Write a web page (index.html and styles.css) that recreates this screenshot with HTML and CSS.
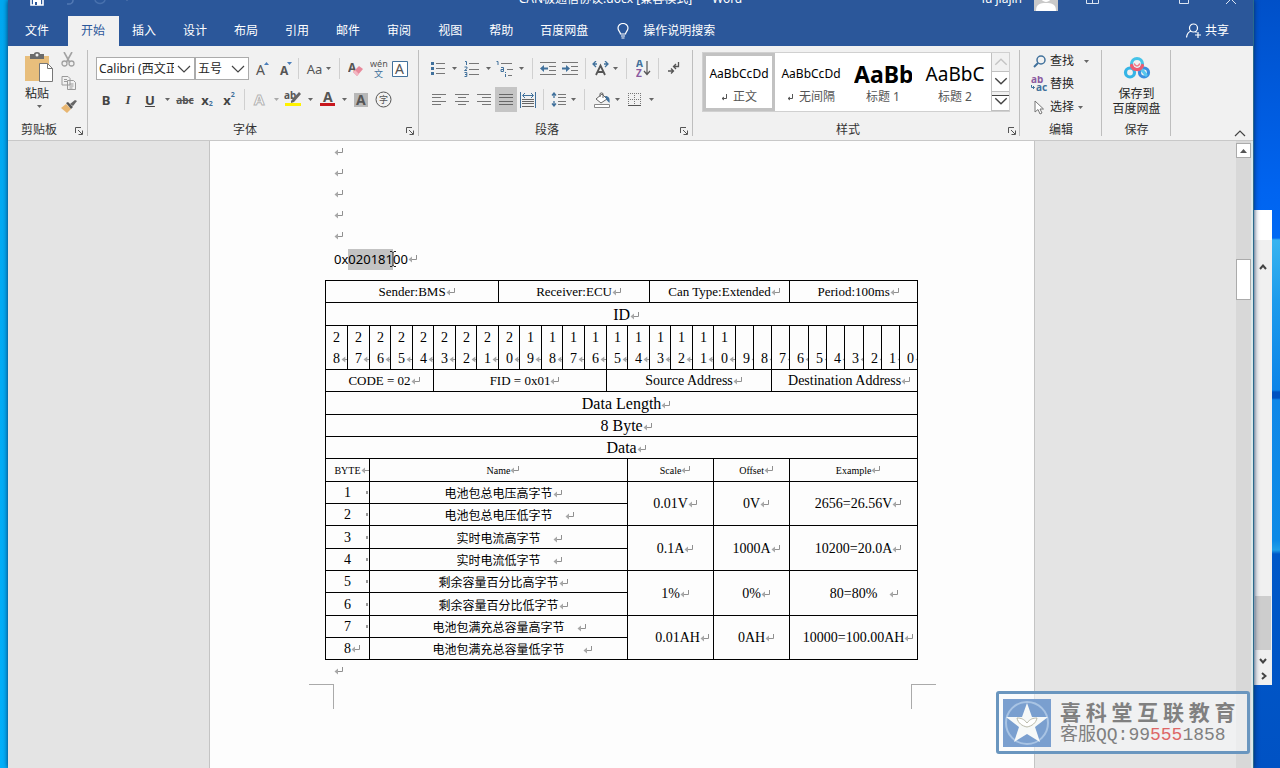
FILE: index.html
```html
<!DOCTYPE html>
<html lang="zh-CN">
<head>
<meta charset="utf-8">
<title>Word</title>
<link rel="stylesheet" href="styles.css">
</head>
<body>
<svg class="defs" aria-hidden="true">
  <symbol id="caret" viewBox="0 0 7 4"><path d="M0 0h7L3.500 4z" fill="#666"/></symbol>
  <symbol id="caret-up" viewBox="0 0 7 4"><path d="M0 4h7L3.500 0z" fill="#555"/></symbol>
  <symbol id="launch" viewBox="0 0 8 8"><path d="M.5 6V.5H6M3 3l4 4M7.500 3.500v4h-4" fill="none" stroke="#555"/></symbol>
  <symbol id="chev-down" viewBox="0 0 12 7"><path d="M1 1l5 5 5-5" fill="none" stroke="#444" stroke-width="1.200"/></symbol>
  <symbol id="chev-up" viewBox="0 0 12 7"><path d="M1 6l5-5 5 5" fill="none" stroke="currentColor" stroke-width="1.200"/></symbol>
</svg>
<div class="backwin">
  <div class="backwin-head"></div>
  <div class="backwin-bar">
    <svg class="bk-up" width="8" height="6" viewBox="0 0 8 6"><path d="M1 5l3-3.500L7 5" fill="none" stroke="#444" stroke-width="2"/></svg>
    <div class="bk-thumb"></div>
    <svg width="8" height="6" viewBox="0 0 8 6"><path d="M1 1l3 3.500L7 1" fill="none" stroke="#444" stroke-width="2"/></svg>
    <svg width="7" height="8" viewBox="0 0 7 8"><path d="M2 1l3.500 3L2 7" fill="none" stroke="#444" stroke-width="2"/></svg>
  </div>
</div>
<main class="window">
  <header class="titlebar">
    <div class="quick">
      <svg width="14" height="14" viewBox="0 0 14 14"><path d="M1 1h10l2 2v10H1z" fill="none" stroke="#fff" stroke-width="1.600"/><path d="M3 8h8v5H3z" fill="#fff"/><path d="M5 10h2v3H5z" fill="#2b579a"/></svg>
      <svg width="13" height="12" viewBox="0 0 13 12"><path d="M2 4h5a4 3.500 0 010 7H5" fill="none" stroke="#5279b4" stroke-width="1.500"/></svg>
      <svg width="13" height="12" viewBox="0 0 13 12"><path d="M11 4a5 4 0 11-8 0" fill="none" stroke="#4770ad" stroke-width="1.500"/></svg>
      <svg width="6" height="4" viewBox="0 0 6 4"><path d="M0 0h6L3 3.500z" fill="#fff"/></svg>
    </div>
    <div class="doc-title"><span>CAN极通信协议.docx [兼容模式]</span><span>-</span><span>Word</span></div>
    <div class="account">
      <span class="user">lu jiajin</span>
      <svg class="avatar" width="24" height="24" viewBox="0 0 24 24"><path d="M0 0h24v24H0z" fill="#c9c9c9"/><circle cx="12" cy="10" r="5" fill="#fff"/><path d="M2 24c0-7 4-8 10-8s10 1 10 8z" fill="#fff"/></svg>
      <svg class="w-opt" width="13" height="10" viewBox="0 0 13 10"><path d="M.5.5h12v9H.5zM.5 5.500h12M6.500 5.500v4" fill="none" stroke="#dce5f2"/></svg>
      <svg class="w-max" width="10" height="10" viewBox="0 0 10 10"><path d="M.5.5h9v9h-9z" fill="none" stroke="#dce5f2"/></svg>
      <svg width="12" height="12" viewBox="0 0 12 12"><path d="M1 1l10 10M11 1L1 11" stroke="#dce5f2"/></svg>
    </div>
  </header>
  <nav class="tabs">
    <button class="tab tab-file">文件</button><button class="tab active">开始</button><button class="tab">插入</button><button class="tab">设计</button><button class="tab">布局</button><button class="tab">引用</button><button class="tab">邮件</button><button class="tab">审阅</button><button class="tab">视图</button><button class="tab">帮助</button><button class="tab">百度网盘</button>
    <button class="tab tell"><svg width="12" height="16" viewBox="0 0 12 16"><path d="M3.500 11c0-2-2.500-3-2.500-6a5 4.500 0 0110 0c0 3-2.500 4-2.500 6zM4 13h4M4.500 15h3" fill="none" stroke="#fff" stroke-width="1.200"/></svg>操作说明搜索</button>
    <button class="tab share"><svg width="16" height="16" viewBox="0 0 16 16"><circle cx="7.500" cy="5" r="4" fill="none" stroke="#fff" stroke-width="1.200"/><path d="M5 8c-3 1-4 3-4.500 6.500M9.500 8.500l1 1M12 9v6M9 12h6" fill="none" stroke="#fff" stroke-width="1.200"/></svg>共享</button>
  </nav>
  <section class="ribbon">
    <div class="group g-clip">
      <div class="clip">
        <button class="paste">
          <svg width="30" height="30" viewBox="0 0 30 30"><path d="M1 4h24v25H1z" fill="#e8be7c"/><path d="M6 2h4a3 2 0 016 0h4v5H6z" fill="#6b6b6b"/><circle cx="13" cy="3" r="1.500" fill="#f1f1f1"/><path d="M15.500 11.500h8l5 5v13h-13z" fill="#fff" stroke="#777"/><path d="M23.500 11.500v5h5" fill="none" stroke="#777"/></svg>
          <span>粘贴</span>
          <svg width="5" height="3"><use href="#caret"/></svg>
        </button>
        <div class="clip-side">
          <button aria-label="剪切"><svg width="14" height="15" viewBox="0 0 14 15"><path d="M3 0l5.500 10M11 0L5.500 10" stroke="#a2a2a2" stroke-width="1.600"/><circle cx="3.500" cy="11.500" r="2.500" fill="none" stroke="#a2a2a2" stroke-width="1.300"/><circle cx="10.500" cy="11.500" r="2.500" fill="none" stroke="#a2a2a2" stroke-width="1.300"/></svg></button>
          <button aria-label="复制"><svg width="16" height="14" viewBox="0 0 16 14"><path d="M1 .5h6l2 2V9H1zM6.500 4.500h6l2 2v7h-8z" fill="#f1f1f1" stroke="#9a9a9a"/><path d="M3 3.500h3M3 5.500h3M8.500 8h4M8.500 10h4M8.500 12h3" stroke="#9a9a9a"/></svg></button>
          <button aria-label="格式刷"><svg width="16" height="14" viewBox="0 0 16 14"><path d="M0 9l5-4 5 5-4 4z" fill="#e8b671"/><path d="M5 4l2-1 5 5-2 2z" fill="#555"/><path d="M9 5l5-4 2 1-4 5z" fill="#666"/></svg></button>
        </div>
      </div>
      <div class="caption"><span>剪贴板</span><svg width="8" height="8"><use href="#launch"/></svg></div>
    </div>
    <div class="group g-font">
      <div class="row">
        <select class="combo c-face" aria-label="字体"><option>Calibri (西文正文)</option></select><select class="combo c-size" aria-label="字号"><option>五号</option></select>
        <button class="b26" aria-label="增大字号"><svg width="14" height="16" viewBox="0 0 14 16"><text x="1" y="14" class="t14">A</text><path d="M9 4l2.500-3L14 4z" fill="#4a7ebb"/></svg></button>
        <button class="b20" aria-label="减小字号"><svg width="13" height="16" viewBox="0 0 13 16"><text x="1" y="14" class="t12">A</text><path d="M8 1h5l-2.500 3z" fill="#4a7ebb"/></svg></button>
        <i class="sep s7"></i>
        <button class="b34" aria-label="更改大小写"><span class="aa">Aa</span><svg width="5" height="3"><use href="#caret"/></svg></button>
        <i class="sep s7"></i>
        <button class="b26" aria-label="清除格式"><svg width="16" height="16" viewBox="0 0 16 16"><text x="0" y="11" class="t12">A</text><path d="M5 11l6-6 4 3-6 7z" fill="#e8899b"/><path d="M5 11l2-2 4 4-2 2z" fill="#f3b6c2"/></svg></button>
        <button class="b20" aria-label="拼音指南"><svg width="18" height="18" viewBox="0 0 18 18"><text x="0" y="7" class="t9">wén</text><text x="4" y="17" class="t9 blue">文</text></svg></button>
        <button class="b22" aria-label="字符边框"><svg width="16" height="16" viewBox="0 0 16 16"><path d="M.5.5h15v15H.5z" fill="#fff" stroke="#41719c"/><text x="3" y="13" class="t14">A</text></svg></button>
      </div>
      <div class="row">
        <button class="b20 glyph">B</button><button class="b24 glyph ital">I</button><button class="b20 glyph under">U</button><button class="b14" aria-label="下划线选项"><svg width="5" height="3"><use href="#caret"/></svg></button><button class="b22 strike">abc</button><button class="b22 glyph">x<sub>2</sub></button><button class="b22 glyph">x<sup>2</sup></button>
        <i class="sep s8"></i>
        <button class="b24" aria-label="文本效果"><svg width="14" height="15" viewBox="0 0 14 15"><text x="1" y="13" class="t15 outline">A</text></svg></button><button class="b8 dim" aria-label="效果选项"><svg width="5" height="3"><use href="#caret"/></svg></button>
        <button class="b26" aria-label="突出显示"><svg width="18" height="17" viewBox="0 0 18 17"><text x="0" y="8" class="t10">ab</text><path d="M7 10l8-9 2 2-7 8-3 1z" fill="#666"/><path d="M1 12h16v3H1z" fill="#fff200"/></svg></button><button class="b8" aria-label="突出显示颜色"><svg width="5" height="3"><use href="#caret"/></svg></button>
        <button class="b26" aria-label="字体颜色"><svg width="17" height="17" viewBox="0 0 17 17"><text x="4" y="11" class="t14 heavy">A</text><path d="M1 12h15v3H1z" fill="#c8171e"/></svg></button><button class="b8" aria-label="颜色选项"><svg width="5" height="3"><use href="#caret"/></svg></button>
        <button class="b26" aria-label="字符底纹"><svg width="14" height="14" viewBox="0 0 14 14"><path d="M0 0h14v14H0z" fill="#b8b8b8"/><text x="2" y="12" class="t14 heavy">A</text></svg></button>
        <button class="b18" aria-label="带圈字符"><svg width="17" height="17" viewBox="0 0 17 17"><circle cx="8.500" cy="8.500" r="7.500" fill="none" stroke="#555"/><text x="4" y="12" class="t9">字</text></svg></button>
      </div>
      <div class="caption"><span>字体</span><svg width="8" height="8"><use href="#launch"/></svg></div>
    </div>
    <div class="group g-para">
      <div class="row">
        <button class="b22" aria-label="项目符号"><svg width="14" height="15" viewBox="0 0 14 15"><path d="M0 1h3v3H0zM0 6h3v3H0zM0 11h3v3H0z" fill="#41719c"/><path d="M5 2.500h9M5 7.500h9M5 12.500h9" stroke="#777"/></svg></button><button class="b12" aria-label="符号选项"><svg width="5" height="3"><use href="#caret"/></svg></button>
        <button class="b22" aria-label="编号"><svg width="15" height="16" viewBox="0 0 15 16"><path d="M1 .5h1.500V4M.5 6H3v1.500L.5 9.500H3M.5 11.500h2.300v4H.5M1 13.500h2" fill="none" stroke="#41719c"/><path d="M5 2.500h10M5 8.500h10M5 13.500h10" stroke="#777"/></svg></button><button class="b12" aria-label="编号选项"><svg width="5" height="3"><use href="#caret"/></svg></button>
        <button class="b22" aria-label="多级列表"><svg width="18" height="16" viewBox="0 0 18 16"><path d="M.5.5H2V4M5 6.500h2.500v4M5 8.500h2.500M5 8.500v2h2.500M9.500 11v1M9.500 13v3" fill="none" stroke="#41719c"/><path d="M5 2.500h11M11 8.500h6M12 14.500h4" stroke="#777"/></svg></button><button class="b10" aria-label="列表选项"><svg width="5" height="3"><use href="#caret"/></svg></button>
        <i class="sep s12"></i>
        <button class="b20" aria-label="减少缩进"><svg width="16" height="13" viewBox="0 0 16 13"><path d="M0 .5h16M9 4.500h7M9 8.500h7M0 12.500h16" stroke="#777"/><path d="M0 6.500l4-3.500v2.500h4v2H4V10z" fill="#41719c"/></svg></button><button class="b24" aria-label="增加缩进"><svg width="16" height="13" viewBox="0 0 16 13"><path d="M0 .5h16M9 4.500h7M9 8.500h7M0 12.500h16" stroke="#777"/><path d="M8 6.500L4 3v2.500H0v2h4V10z" fill="#41719c"/></svg></button>
        <i class="sep s8"></i>
        <button class="b22" aria-label="中文版式"><svg width="17" height="15" viewBox="0 0 17 15"><path d="M4 14L8.500 4.500 13 14M5.500 11h6" fill="none" stroke="#555" stroke-width="1.800"/><path d="M4 0L1 3l3 3M1 3h4M13 0l3 3-3 3M16 3h-4" fill="none" stroke="#41719c" stroke-width="1.300"/></svg></button><button class="b8" aria-label="版式选项"><svg width="5" height="3"><use href="#caret"/></svg></button>
        <i class="sep s14"></i>
        <button class="b20" aria-label="排序"><svg width="15" height="17" viewBox="0 0 15 17"><text x="0" y="7" class="t10 blue">A</text><text x="0" y="17" class="t10 purple">Z</text><path d="M11 1v13M8 11l3 3.500 3-3.500" fill="none" stroke="#555" stroke-width="1.200"/></svg></button>
        <i class="sep s10"></i>
        <button class="b22" aria-label="显示编辑标记"><svg width="12" height="14" viewBox="0 0 12 14"><path d="M10.500 0v4.500H6M8 2L5.500 4.500 8 7M0 9h5M3 6.500L5.500 9 3 11.500" fill="none" stroke="#555" stroke-width="1.300"/></svg></button>
      </div>
      <div class="row">
        <button class="b24" aria-label="左对齐"><svg width="14" height="11" viewBox="0 0 14 11"><path d="M0 .5h14M0 3.500h9M0 7.500h14M0 10.500h9" stroke="#777"/></svg></button><button class="b22" aria-label="居中"><svg width="14" height="11" viewBox="0 0 14 11"><path d="M0 .5h14M3 3.500h8M0 7.500h14M3 10.500h8" stroke="#777"/></svg></button><button class="b22" aria-label="右对齐"><svg width="14" height="11" viewBox="0 0 14 11"><path d="M0 .5h14M5 3.500h9M0 7.500h14M5 10.500h9" stroke="#777"/></svg></button><button class="b22 pressed" aria-label="两端对齐"><svg width="14" height="11" viewBox="0 0 14 11"><path d="M0 .5h14M0 3.500h14M0 7.500h14M0 10.500h14" stroke="#666"/></svg></button><button class="b22" aria-label="分散对齐"><svg width="16" height="16" viewBox="0 0 16 16"><path d="M.5 0v16M15.500 0v16M3 3.500h10M5 1L2.500 3.500 5 6M11 1l2.500 2.500L11 6" fill="none" stroke="#41719c"/><path d="M2 7.500h12M2 9.500h12M2 11.500h12M2 14.500h12" stroke="#666"/></svg></button>
        <i class="sep s8"></i>
        <button class="b22" aria-label="行距"><svg width="15" height="15" viewBox="0 0 15 15"><path d="M3 1v5M1 3.500L3 1l2 2.500M3 14V9M1 11.500L3 14l2-2.500" fill="none" stroke="#41719c" stroke-width="1.300"/><path d="M7 2.500h8M7 5.500h8M7 9.500h8M7 12.500h8" stroke="#777"/></svg></button><button class="b8" aria-label="行距选项"><svg width="5" height="3"><use href="#caret"/></svg></button>
        <i class="sep s14"></i>
        <button class="b22" aria-label="底纹"><svg width="17" height="16" viewBox="0 0 17 16"><path d="M2 7l6-5 5 5-6 4z" fill="#fff" stroke="#666"/><path d="M6 5V1.500a2 1.500 0 013 0V6" fill="none" stroke="#666"/><path d="M11 4c4 0 5 2 4.500 7l-3-3z" fill="#41719c"/><path d="M.5 12.500h15v3H.5z" fill="#fff" stroke="#888"/></svg></button><button class="b8" aria-label="底纹颜色"><svg width="5" height="3"><use href="#caret"/></svg></button>
        <button class="b26" aria-label="边框"><svg width="13" height="13" viewBox="0 0 13 13"><path d="M0 .5h13M0 6.500h13M.5 0v13M6.500 0v13M12.500 0v13" fill="none" stroke="#777" stroke-dasharray="1 1"/><path d="M0 12.500h13" stroke="#555"/></svg></button><button class="b8" aria-label="边框选项"><svg width="5" height="3"><use href="#caret"/></svg></button>
      </div>
      <div class="caption"><span>段落</span><svg width="8" height="8"><use href="#launch"/></svg></div>
    </div>
    <div class="group g-style">
      <div class="gallery">
        <button class="style chosen"><span class="sample">AaBbCcDd</span><span class="sname"><b class="mk"></b>正文</span></button>
        <button class="style"><span class="sample">AaBbCcDd</span><span class="sname"><b class="mk"></b>无间隔</span></button>
        <button class="style"><span class="sample big heavy">AaBb</span><span class="sname">标题 1</span></button>
        <button class="style"><span class="sample mid">AaBbC</span><span class="sname">标题 2</span></button>
        <div class="gscroll">
          <button aria-label="上一行" class="faint"><svg width="14" height="8"><use href="#chev-up"/></svg></button>
          <button aria-label="下一行"><svg width="14" height="8"><use href="#chev-down"/></svg></button>
          <button aria-label="其他" class="more"><svg width="14" height="8"><use href="#chev-down"/></svg></button>
        </div>
      </div>
      <div class="caption"><span>样式</span><svg width="8" height="8"><use href="#launch"/></svg></div>
    </div>
    <div class="group g-edit">
      <div class="edits">
        <button><svg width="13" height="13" viewBox="0 0 13 13"><circle cx="8" cy="5" r="4" fill="none" stroke="#41719c" stroke-width="1.500"/><path d="M5 8l-4 4" stroke="#41719c" stroke-width="2"/></svg>查找<svg class="far" width="5" height="3"><use href="#caret"/></svg></button>
        <button><svg width="17" height="16" viewBox="0 0 17 16"><text x="0" y="7" class="t10 purple">ab</text><text x="5" y="15" class="t10 blue">ac</text><path d="M.5 9v2.500h3M2 10l1.500 1.500L2 13" fill="none" stroke="#41719c"/></svg>替换</button>
        <button><svg width="10" height="15" viewBox="0 0 10 15"><path d="M1 1v11l3-2.500L6 14l2-1-2-4h3.500z" fill="#fff" stroke="#777"/></svg>选择<svg class="near" width="5" height="3"><use href="#caret"/></svg></button>
      </div>
      <div class="caption"><span>编辑</span></div>
    </div>
    <div class="group g-save">
      <button class="save">
        <svg width="28" height="24" viewBox="0 0 28 24"><g fill="none" stroke-width="3.200" stroke-linecap="round"><circle cx="7" cy="16.500" r="4.500" stroke="#35b5e6"/><circle cx="21" cy="16.500" r="4.500" stroke="#3a8fe0"/><path d="M18 12.500l5 6.500" stroke="#58c6ee"/><circle cx="14" cy="8" r="5.500" stroke="#45c3e8"/><path d="M8.500 9.500a5.500 5.500 0 005 4 5.500 5.500 0 006-4" stroke="#ee5a70"/><path d="M11.500 8a2.600 2.600 0 005 0" stroke="#f07b8b" stroke-width="1.500"/></g></svg>
        <span>保存到<br>百度网盘</span>
      </button>
      <div class="caption"><span>保存</span></div>
    </div>
    <button class="collapse" aria-label="折叠功能区"><svg width="12" height="7"><use href="#chev-up"/></svg></button>
  </section>
  <section class="canvas">
    <div class="scroller">
      <article class="page">
        <p class="ret"></p><p class="ret"></p><p class="ret"></p><p class="ret"></p><p class="ret"></p>
        <p class="ret idline">0x<mark>020181</mark><svg class="ibeam" width="8" height="18" viewBox="0 0 8 18"><path d="M1 1.500h2l1 1 1-1h2M4 2v14M1 16.500h2l1-1 1 1h2" fill="none" stroke="#222"/></svg>00</p>
        <table class="can">
          <colgroup><col class="c22"><col class="c22"><col class="c21"><col class="c22"><col class="c21"><col class="c22"><col class="c21"><col class="c22"><col class="c21"><col class="c22"><col class="c21"><col class="c22"><col class="c22"><col class="c21"><col class="c22"><col class="c21"><col class="c22"><col class="c21"><col class="c22"><col class="c18"><col class="c18"><col class="c18"><col class="c19"><col class="c18"><col class="c18"><col class="c19"><col class="c18"><col class="c18"><col class="c18"></colgroup>
          <tbody>
          <tr class="f13"><td colspan="8"><span class="ret">Sender:BMS</span></td><td colspan="7"><span class="ret">Receiver:ECU</span></td><td colspan="7"><span class="ret">Can Type:Extended</span></td><td colspan="7"><span class="ret">Period:100ms</span></td></tr>
          <tr class="f16"><td colspan="29"><span class="ret">ID</span></td></tr>
          <tr class="bits"><td>2<br>8</td><td>2<br>7</td><td>2<br>6</td><td>2<br>5</td><td>2<br>4</td><td>2<br>3</td><td>2<br>2</td><td>2<br>1</td><td>2<br>0</td><td>1<br>9</td><td>1<br>8</td><td>1<br>7</td><td>1<br>6</td><td>1<br>5</td><td>1<br>4</td><td>1<br>3</td><td>1<br>2</td><td>1<br>1</td><td>1<br>0</td><td>9</td><td>8</td><td>7</td><td>6</td><td>5</td><td>4</td><td>3</td><td>2</td><td>1</td><td>0</td></tr>
          <tr class="f13"><td colspan="5"><span class="ret">CODE = 02</span></td><td colspan="8"><span class="ret">FID = 0x01</span></td><td colspan="8" class="f14"><span class="ret">Source Address</span></td><td colspan="8" class="f14"><span class="ret">Destination Address</span></td></tr>
          <tr class="f16"><td colspan="29"><span class="ret">Data Length</span></td></tr>
          <tr class="f16"><td colspan="29"><span class="ret">8 Byte</span></td></tr>
          <tr class="f16"><td colspan="29"><span class="ret">Data</span></td></tr>
          <tr class="f10"><td colspan="2"><span class="ret">BYTE</span></td><td colspan="12"><span class="ret">Name</span></td><td colspan="4"><span class="ret">Scale</span></td><td colspan="4"><span class="ret">Offset</span></td><td colspan="7"><span class="ret">Example</span></td></tr>
          <tr><td colspan="2" class="idx">1</td><td colspan="12" class="zh"><span class="ret">电池包总电压高字节</span></td><td colspan="4" rowspan="2"><span class="ret">0.01V</span></td><td colspan="4" rowspan="2"><span class="ret">0V</span></td><td colspan="7" rowspan="2"><span class="ret">2656=26.56V</span></td></tr>
          <tr><td colspan="2" class="idx">2</td><td colspan="12" class="zh"><span class="ret gap">电池包总电压低字节</span></td></tr>
          <tr><td colspan="2" class="idx">3</td><td colspan="12" class="zh"><span class="ret gap">实时电流高字节</span></td><td colspan="4" rowspan="2"><span class="ret">0.1A</span></td><td colspan="4" rowspan="2"><span class="ret">1000A</span></td><td colspan="7" rowspan="2"><span class="ret">10200=20.0A</span></td></tr>
          <tr><td colspan="2" class="idx">4</td><td colspan="12" class="zh"><span class="ret gap">实时电流低字节</span></td></tr>
          <tr><td colspan="2" class="idx">5</td><td colspan="12" class="zh"><span class="ret">剩余容量百分比高字节</span></td><td colspan="4" rowspan="2"><span class="ret">1%</span></td><td colspan="4" rowspan="2"><span class="ret">0%</span></td><td colspan="7" rowspan="2"><span class="ret gap">80=80%</span></td></tr>
          <tr><td colspan="2" class="idx">6</td><td colspan="12" class="zh"><span class="ret">剩余容量百分比低字节</span></td></tr>
          <tr><td colspan="2" class="idx">7</td><td colspan="12" class="zh"><span class="ret gap">电池包满充总容量高字节</span></td><td colspan="4" rowspan="2" class="shift"><span class="ret">0.01AH</span></td><td colspan="4" rowspan="2"><span class="ret">0AH</span></td><td colspan="7" rowspan="2"><span class="ret">10000=100.00AH</span></td></tr>
          <tr><td colspan="2"><span class="ret">8</span></td><td colspan="12" class="zh"><span class="ret gap wide">电池包满充总容量低字节</span></td></tr>
          </tbody>
        </table>
        <p class="ret last"></p>
        <div class="crops"><i class="crop-l"></i><i class="crop-r"></i></div>
      </article>
    </div>
    <div class="vbar">
      <button aria-label="向上滚动"><svg width="7" height="4"><use href="#caret-up"/></svg></button>
      <div class="thumb"></div>
    </div>
  </section>
</main>
<aside class="watermark">
  <svg width="48" height="48" viewBox="0 0 48 48"><path d="M0 0h48v48H0z" fill="#7a9fcf"/><circle cx="24" cy="24" r="21" fill="none" stroke="#a9c4e4" stroke-width="2"/><path d="M24 4l5 14h16L32 28l5 15-13-8-13 8 5-15L3 18h16z" fill="#f7f9f8"/><path d="M14 19c4 0 7 1 10 5 3-4 6-5 10-5-1 5-5 8-10 9-5-1-9-4-10-9z" fill="#fff" stroke="#b9b9a8"/></svg>
  <div class="wtext"><div class="w1">喜 科 堂 互 联 教 育</div><div class="w2">客服QQ:99<em>555</em>1858</div></div>
</aside>
</body>
</html>
```
FILE: styles.css
```css
* { box-sizing: border-box; }
html, body { height: 100%; }
body {
  margin: 0;
  overflow: hidden;
  position: relative;
  padding: 0 26px 0 8px;
  font: 12px/16px "Noto Sans", "Noto Sans CJK SC", sans-serif;
  color: #262626;
  background:
    linear-gradient(#00a8f0, #00b0fa) left / 8px 100% no-repeat,
    linear-gradient(#0050c8 0, #0064f0 190px, #0068f4 238px, #38b4f0 240px, #1e9cec 300px, #0c84e8 390px, #0050c0 392px, #0050c0 398px, #1088e8 400px, #0c8ae6 540px, #20a0e8 550px, #0058c8 554px, #0052c4 100%);
}
button { font: inherit; color: inherit; border: 0; background: none; padding: 0; margin: 0; }
svg { display: block; flex: none; }
.defs { position: absolute; width: 0; height: 0; }

.backwin { position: absolute; top: 210px; right: 8px; width: 18px; height: 475px; display: flex; flex-direction: column; background: #f0f0f0; }
.backwin-head { height: 30px; background: #fff; }
.backwin-bar { flex: 1; display: flex; flex-direction: column; align-items: center; gap: 8px; padding: 24px 0 5px; }
.bk-up { margin-bottom: auto; }
.bk-thumb { width: 16px; height: 54px; background: #cdcdcd; }

.window { position: relative; height: 100%; display: flex; flex-direction: column; border-right: 1px solid #2a6a8c; box-shadow: 0 0 5px #0a2a5a; background: #f1f1f1; overflow: hidden; }
.titlebar { flex: none; height: 34px; margin-top: -18px; display: grid; grid-template-columns: 1fr auto 1fr; align-items: center; background: #2b579a; color: #fff; }
.quick { display: flex; align-items: center; gap: 18px; padding-left: 22px; }
.doc-title { display: flex; gap: 8px; }
.account { display: flex; justify-content: flex-end; align-items: center; padding-right: 16px; }
.user { margin-right: 12px; }
.avatar { margin-right: 28px; }
.w-opt { margin-right: 80px; }
.w-max { margin-right: 36px; }
.tabs { flex: none; display: flex; height: 30px; padding: 0 10px 0 4px; background: #2b579a; color: #fff; }
.tab { padding: 0 14px 1px 13px; white-space: nowrap; }
.tab-file { padding-right: 19px; }
.tab.active { background: #f1f1f1; color: #2b579a; }
.tell, .share { display: flex; align-items: center; }
.tell { gap: 14px; padding-left: 15px; }
.share { gap: 3px; margin-left: auto; }

.ribbon { flex: none; display: flex; height: 95px; position: relative; border-bottom: 1px solid #c8c8c8; background: #f1f1f1; }
.group { position: relative; display: flex; flex-direction: column; padding: 10px 8px 0; }
.group::after { content: ""; position: absolute; right: 0; top: 4px; bottom: 4px; width: 1px; background: #bebebe; }
.g-clip { width: 80px; }
.g-font { width: 331px; }
.g-para { width: 274px; }
.g-style { width: 327px; padding: 6px 10px 0 9px; }
.g-edit { width: 82px; padding-top: 4px; }
.g-save { width: 69px; padding: 10px 4px 0; }
.caption { margin-top: auto; height: 18px; text-align: center; position: relative; color: #333; }
.caption svg { position: absolute; right: -3px; top: 5px; }
.g-clip .caption { padding-right: 18px; }
.g-font .caption { padding-right: 17px; }
.g-para .caption { padding-right: 18px; }
.g-style .caption { padding-right: 16px; }
.g-style .caption svg { right: -6px; }
.row { display: flex; height: 25px; margin-bottom: 6px; }
.row button { display: flex; align-items: center; justify-content: center; }
.b8 { width: 8px; } .b10 { width: 10px; } .b12 { width: 12px; } .b14 { width: 14px; } .b18 { width: 18px; }
.b20 { width: 20px; } .b22 { width: 22px; } .b24 { width: 24px; } .b26 { width: 26px; } .b34 { width: 34px; gap: 4px; }
.sep { flex: none; align-self: stretch; margin: 2px 0; background: linear-gradient(#d0d0d0, #d0d0d0) center / 1px 100% no-repeat; }
.s7 { width: 7px; } .s8 { width: 8px; } .s10 { width: 10px; } .s12 { width: 12px; } .s14 { width: 14px; }
.dim { opacity: .5; }
.pressed { background: #c5c5c5; }
.combo {
  appearance: none; margin: 1px 0; border: 1px solid #ababab; border-radius: 0; color: #262626; padding: 0 20px 0 2px; font: 12px/20px "Noto Sans", "Noto Sans CJK SC", sans-serif;
  background: #fff url("data:image/svg+xml,%3Csvg xmlns='http://www.w3.org/2000/svg' width='14' height='8'%3E%3Cpath d='M1 1l6 6 6-6' fill='none' stroke='%23444' stroke-width='1.200'/%3E%3C/svg%3E") right 3px center no-repeat;
}
.c-face { width: 99px; }
.c-size { width: 54px; }
.aa { font-size: 13px; color: #555; }
.glyph { font-size: 13px; font-weight: bold; color: #444; }
.ital { font-family: "Liberation Serif", serif; font-style: italic; }
.under { text-decoration: underline; }
.strike { text-decoration: line-through; font-size: 10px; font-weight: bold; color: #555; }
.glyph sub, .glyph sup { font-size: 7px; line-height: 8px; color: #41719c; }
.glyph sub { align-self: flex-end; padding-bottom: 4px; }
.glyph sup { align-self: flex-start; padding-top: 4px; }
text { fill: #555; font-family: "Noto Sans", "Noto Sans CJK SC", sans-serif; }
.t9 { font-size: 9px; } .t10 { font-size: 10px; } .t12 { font-size: 12px; } .t14 { font-size: 14px; } .t15 { font-size: 15px; }
.t10, .t12, .heavy { font-weight: bold; }
.outline { fill: #fff; stroke: #b5b5b5; font-weight: bold; }
.blue { fill: #41719c; }
.purple { fill: #8a5aa0; }

.clip { display: flex; gap: 7px; margin: -4px -8px 0 8px; }
.paste { width: 30px; display: flex; flex-direction: column; align-items: center; justify-content: space-between; height: 56px; }
.paste span { padding-right: 4px; }
.clip-side { display: flex; flex-direction: column; gap: 9px; }

.gallery { display: flex; height: 60px; border: 1px solid #d0d0d0; background: #fff; }
.style { width: 72px; display: flex; flex-direction: column; align-items: center; justify-content: flex-end; padding-bottom: 4px; overflow: hidden; }
.chosen { box-shadow: inset 0 0 0 3px #c2c2c2; }
.sample { line-height: 26px; color: #000; white-space: nowrap; }
.sample.big { font-size: 23px; width: 58px; overflow: hidden; }
.sample.mid { font-size: 19px; }
.sname { display: flex; align-items: center; gap: 5px; line-height: 20px; color: #555; }
.mk { width: 7px; height: 7px; background: url("data:image/svg+xml,%3Csvg xmlns='http://www.w3.org/2000/svg' width='7' height='7'%3E%3Cpath d='M5.500 0v4.500H1M3 3L1 4.500 3 6' fill='none' stroke='%23555'/%3E%3C/svg%3E") no-repeat; }
.gscroll { width: 18px; margin-left: auto; display: flex; flex-direction: column; }
.gscroll button { flex: 1; display: flex; align-items: center; justify-content: center; border-left: 1px solid #c0c0c0; border-bottom: 1px solid #c0c0c0; }
.faint { color: #c4c4c4; background: #f1f1f1; }
.more { box-shadow: inset 0 3px 0 #f1f1f1, inset 0 4px 0 #444; }
.edits { display: flex; flex-direction: column; gap: 1px; }
.edits button { display: grid; grid-template-columns: 18px 24px auto; align-items: center; justify-items: center; justify-content: start; column-gap: 2px; height: 22px; padding-left: 2px; }
.far { margin-left: 8px; }
.near { margin-left: 2px; }
.save { display: flex; flex-direction: column; align-items: center; gap: 6px; line-height: 15px; white-space: nowrap; }
.collapse { position: absolute; right: 7px; bottom: 3px; color: #444; }

.canvas { flex: 1; min-height: 0; display: flex; background: #e4e4e4; }
.scroller { flex: 1; overflow: hidden; }
.page { width: 826px; max-width: 100%; min-height: 100%; margin: 0 auto; padding: 0 124px; background: #fdfdfd; border: solid #c4c4c4; border-width: 0 1px; }
.page p { margin: 0; height: 21px; display: flex; align-items: center; }
.page .idline { height: 26px; font-size: 13px; line-height: 21px; color: #000; }
mark { background: #c3c3c3; color: inherit; }
.ibeam { margin: 0 -4px; }
.ret::after {
  content: ""; display: inline-block; width: 9px; height: 8px; flex: none;
  background: url("data:image/svg+xml,%3Csvg xmlns='http://www.w3.org/2000/svg' width='9' height='8'%3E%3Cpath d='M8.500 0v4.500H1' fill='none' stroke='%23909090'/%3E%3Cpath d='M4 1.500v6L.5 4.500z' fill='%23a8a8a8'/%3E%3C/svg%3E") no-repeat;
}
.can { width: 593px; margin: 8px 0 0 -9px; border-collapse: collapse; table-layout: fixed; font: 14px/20px "Liberation Serif", "Noto Sans CJK SC", serif; color: #000; }
.c18 { width: 18px; } .c19 { width: 19px; } .c21 { width: 21px; } .c22 { width: 22px; }
.can tr { height: 22px; }
.can tr:nth-child(3n + 2) { height: 23px; }
.can td { border: 1px solid #000; padding: 1px 0 0; text-align: center; white-space: nowrap; overflow: hidden; }
.can .f10 td { font-size: 10px; }
.can .f13 td { font-size: 13px; }
.can .f13 td.f14 { font-size: 14px; }
.can .f16 td { font-size: 16px; }
.can tr.bits { height: 44px; }
.can .bits td {
  text-align: left; padding-left: 7px; vertical-align: bottom; line-height: 21px;
  background: url("data:image/svg+xml,%3Csvg xmlns='http://www.w3.org/2000/svg' width='7' height='8'%3E%3Cpath d='M7 4.500H1' stroke='%23909090'/%3E%3Cpath d='M4 1.500v6L.5 4.500z' fill='%23a8a8a8'/%3E%3C/svg%3E") 15px 29px no-repeat;
}
/* The paragraph mark hangs beside the text, so the text alone is centred. */
.can .ret::after { margin-right: -9px; }
.can .gap::after { margin-left: 12px; margin-right: -21px; }
.can .wide::after { margin-left: 18px; margin-right: -27px; }
.can .idx { background: linear-gradient(#999, #999) right 1px center / 2px 3px no-repeat; }
.can .zh { font: 12px/20px "Noto Sans CJK SC", sans-serif; }
.can .shift { padding-left: 14px; }
.crops { display: flex; justify-content: space-between; margin: 3px -26px 0 -25px; }
.crops i { width: 25px; height: 25px; border-top: 1px solid #aaa; }
.crop-l { border-right: 1px solid #aaa; }
.crop-r { border-left: 1px solid #aaa; }
.vbar { width: 17px; padding: 2px 2px 0 0; background: #d8d8d8; border-right: 2px solid #dce8ea; }
.vbar button { width: 15px; height: 15px; display: flex; align-items: center; justify-content: center; background: #fff; border: 1px solid #ababab; }
.thumb { width: 15px; height: 41px; margin-top: 101px; background: #fff; border: 1px solid #ababab; }

.watermark { position: absolute; right: 30px; bottom: 14px; display: flex; gap: 9px; width: 254px; height: 63px; padding: 5px 4px; border: 3px solid #6a96bf; border-radius: 3px; background: rgba(248, 250, 252, .6); color: #808080; }
.wtext { white-space: nowrap; }
.w1 { font: bold 21px/24px "Noto Sans CJK SC", sans-serif; }
.w2 { font: 18px/24px "Liberation Mono", "Noto Sans CJK SC", monospace; }
.w2 em { font-style: normal; color: #dd6666; }
```
